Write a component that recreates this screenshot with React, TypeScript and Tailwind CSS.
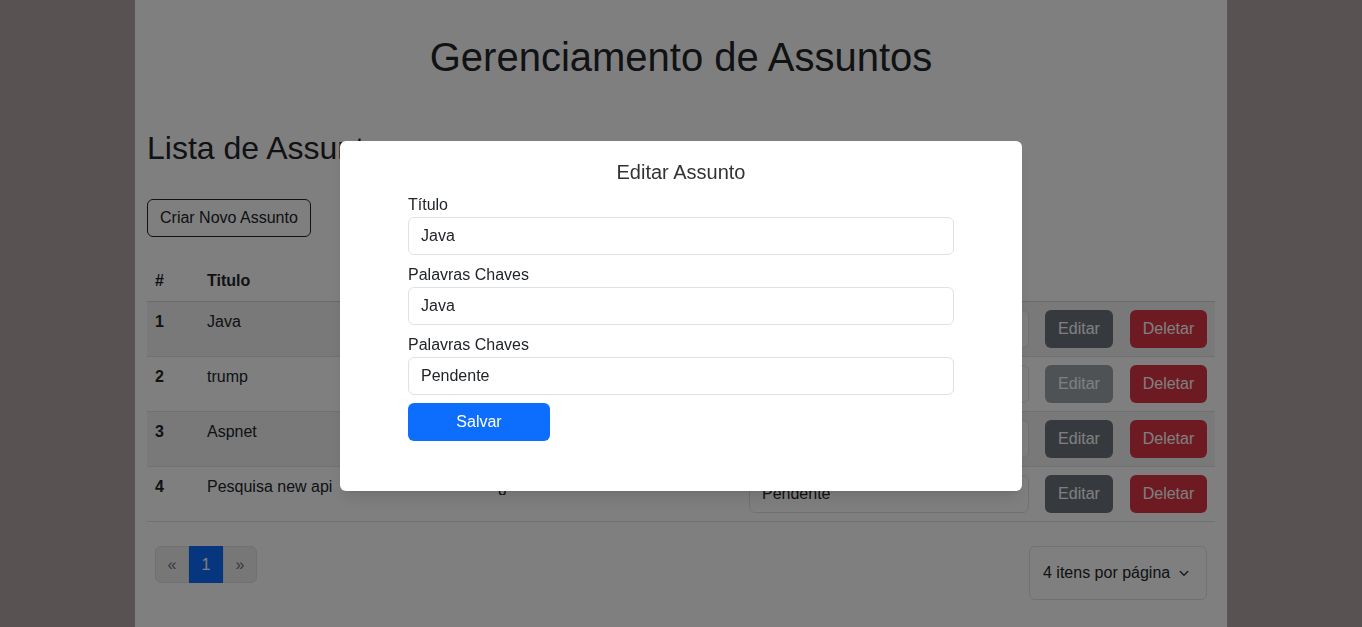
import React from "react";

interface Assunto {
  id: number;
  titulo: string;
  palavras: string;
  status: string;
  editDisabled?: boolean;
}

const assuntos: Assunto[] = [
  { id: 1, titulo: "Java", palavras: "Java", status: "Pendente" },
  { id: 2, titulo: "trump", palavras: "trump", status: "Pendente", editDisabled: true },
  { id: 3, titulo: "Aspnet", palavras: "Aspnet", status: "Pendente" },
  { id: 4, titulo: "Pesquisa new api", palavras: "{}", status: "Pendente" },
];

const Field: React.FC<{ label: string; value: string; first?: boolean }> = ({ label, value, first }) => (
  <div className={first ? "" : "mt-[7px]"}>
    <label className="block text-[16px] leading-[25px] text-[#212529]">{label}</label>
    <div className="flex h-[38px] items-center rounded-md border border-[#dee2e6] px-3 text-[16px] text-[#212529]">
      {value}
    </div>
  </div>
);

const App: React.FC = () => {
  return (
    <div className="relative min-h-[627px] bg-[#b0a4a4] font-['Liberation_Sans',Arial,sans-serif] text-[#212529]">
      <div className="mx-auto min-h-[627px] w-[1092px] bg-white px-3">
        <h1 className="pt-[33px] text-center text-[40px] leading-[48px]">Gerenciamento de Assuntos</h1>
        <h2 className="mt-[48px] text-[32px] leading-[38px]">Lista de Assuntos</h2>
        <button className="mt-[32px] h-[38px] rounded-md border border-[#212529] px-3 text-[16px]">
          Criar Novo Assunto
        </button>

        <table className="mt-[24px] w-full border-collapse text-[16px]">
          <colgroup>
            <col className="w-[52px]" />
            <col className="w-[290px]" />
            <col className="w-[252px]" />
            <col className="w-[296px]" />
            <col />
          </colgroup>
          <thead>
            <tr className="border-b border-[#d0d4d8] text-left font-bold">
              <th className="p-2 leading-6">#</th>
              <th className="p-2 leading-6">Titulo</th>
              <th className="p-2 leading-6"></th>
              <th className="p-2 leading-6"></th>
              <th className="p-2 leading-6"></th>
            </tr>
          </thead>
          <tbody>
            {assuntos.map((a, i) => (
              <tr key={a.id} className={`border-b border-[#dee2e6] ${i % 2 === 0 ? "bg-[#f2f2f2]" : "bg-white"}`}>
                <td className="p-2 align-top font-bold leading-6">{a.id}</td>
                <td className="p-2 align-top leading-6">{a.titulo}</td>
                <td className="p-2 align-top leading-6">{a.palavras}</td>
                <td className="p-2 align-top">
                  <div className="flex h-[38px] w-[280px] items-center rounded-md border border-[#dee2e6] bg-white px-3">
                    {a.status}
                  </div>
                </td>
                <td className="p-2 align-top">
                  <div className="flex gap-[17px]">
                    <button
                      className={`h-[38px] w-[68px] rounded-md bg-[#6c757d] text-white ${a.editDisabled ? "opacity-65" : ""}`}
                    >
                      Editar
                    </button>
                    <button className="h-[38px] w-[77px] rounded-md bg-[#dc3545] text-white">Deletar</button>
                  </div>
                </td>
              </tr>
            ))}
          </tbody>
        </table>

        <div className="mt-[24px] flex items-start justify-between pb-6">
          <div className="ml-2 flex h-[37px] text-[16px]">
            <span className="flex w-[34px] items-center justify-center rounded-l-md border border-[#dee2e6] bg-[#eeeeee] text-[#6c757d]">
              «
            </span>
            <span className="flex w-[34px] items-center justify-center border border-[#0d6efd] bg-[#0d6efd] text-white">
              1
            </span>
            <span className="flex w-[34px] items-center justify-center rounded-r-md border border-[#dee2e6] bg-[#eeeeee] text-[#6c757d]">
              »
            </span>
          </div>
          <div className="mr-2 flex h-[54px] w-[178px] items-center justify-between rounded-md border border-[#dee2e6] pl-[13px] pr-[14px] text-[16px]">
            <span>4 itens por página</span>
            <svg width="16" height="12" viewBox="0 0 16 16" fill="none" stroke="#343a40" strokeWidth="2" strokeLinecap="round" strokeLinejoin="round">
              <path d="m3 6 5 5 5-5" />
            </svg>
          </div>
        </div>
      </div>

      {/* modal overlay */}
      <div className="fixed inset-0 flex justify-center bg-black/50 pt-[141px]">
        <div className="h-[350px] w-[682px] rounded-md bg-white px-[68px] pt-4 shadow-lg">
          <h3 className="text-center text-[20px] leading-[30px] text-[#333]">Editar Assunto</h3>
          <div className="mt-[5px]">
            <Field label="Título" value="Java" first />
            <Field label="Palavras Chaves" value="Java" />
            <Field label="Palavras Chaves" value="Pendente" />
            <button className="mt-2 h-[38px] w-[142px] rounded-md bg-[#0d6efd] text-[16px] text-white">Salvar</button>
          </div>
        </div>
      </div>
    </div>
  );
};

export default App;
